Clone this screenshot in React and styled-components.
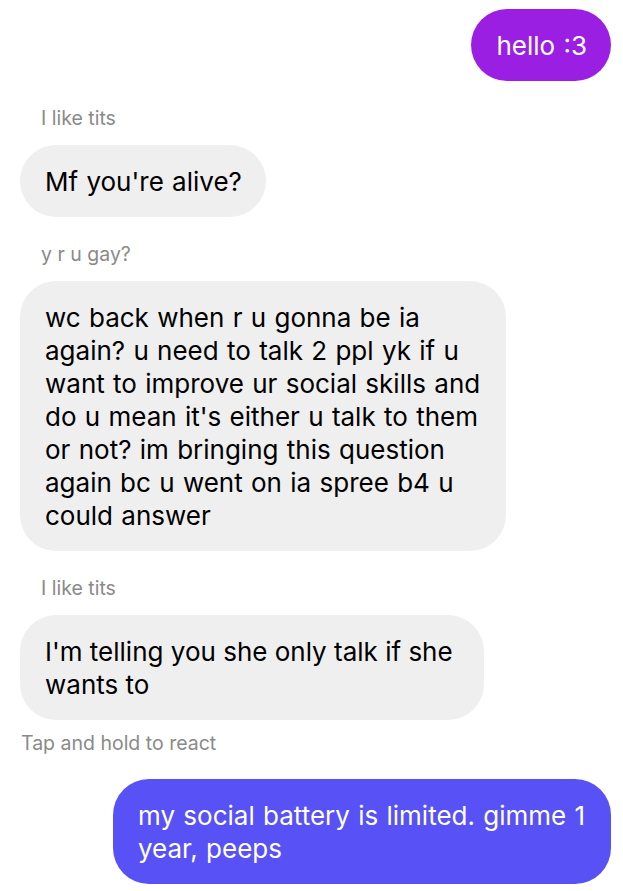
import styled, { createGlobalStyle } from 'styled-components'

const GlobalStyle = createGlobalStyle`
  html, body {
    margin: 0;
    padding: 0;
    background: #ffffff;
  }
  body {
    font-family: Inter, "Noto Sans", "Liberation Sans", sans-serif;
  }
`

const Thread = styled.div`
  display: flex;
  flex-direction: column;
  padding: 9px 12px 0 20px;
  width: 623px;
  height: 891px;
  box-sizing: border-box;
  overflow: hidden;
`

const Bubble = styled.div`
  align-self: ${(p) => (p.mine ? 'flex-end' : 'flex-start')};
  max-width: ${(p) => p.maxWidth || '486px'};
  box-sizing: border-box;
  padding: 20px 24px 19px 25px;
  border-radius: 36px;
  font-size: 26px;
  line-height: 33px;
  word-spacing: ${(p) => (p.tight ? '0' : '1px')};
  color: ${(p) => (p.mine ? '#ffffff' : '#000000')};
  background: ${(p) => p.bg || '#efefef'};
`

const SenderName = styled.div`
  font-size: 19.5px;
  line-height: 24px;
  color: #8a8a8a;
  padding-left: 21px;
  margin-top: 25px;
  margin-bottom: 15px;
`

const Hint = styled.div`
  font-size: 19.5px;
  line-height: 24px;
  color: #8a8a8a;
  padding-left: 1px;
  margin-top: 11px;
  margin-bottom: 24px;
`

export default function App() {
  return (
    <>
      <GlobalStyle />
      <Thread>
        <Bubble mine bg="#9a1fe2">hello :3</Bubble>

        <SenderName>I like tits</SenderName>
        <Bubble>Mf you're alive?</Bubble>

        <SenderName>y r u gay?</SenderName>
        <Bubble>
          wc back when r u gonna be ia again? u need to talk 2 ppl yk if u want
          to improve ur social skills and do u mean it's either u talk to them
          or not? im bringing this question again bc u went on ia spree b4 u
          could answer
        </Bubble>

        <SenderName>I like tits</SenderName>
        <Bubble tight maxWidth="464px">
          I'm telling you she only talk if she wants to
        </Bubble>

        <Hint>Tap and hold to react</Hint>
        <Bubble mine bg="#5851f5" maxWidth="498px">
          my social battery is limited. gimme 1 year, peeps
        </Bubble>
      </Thread>
    </>
  )
}
